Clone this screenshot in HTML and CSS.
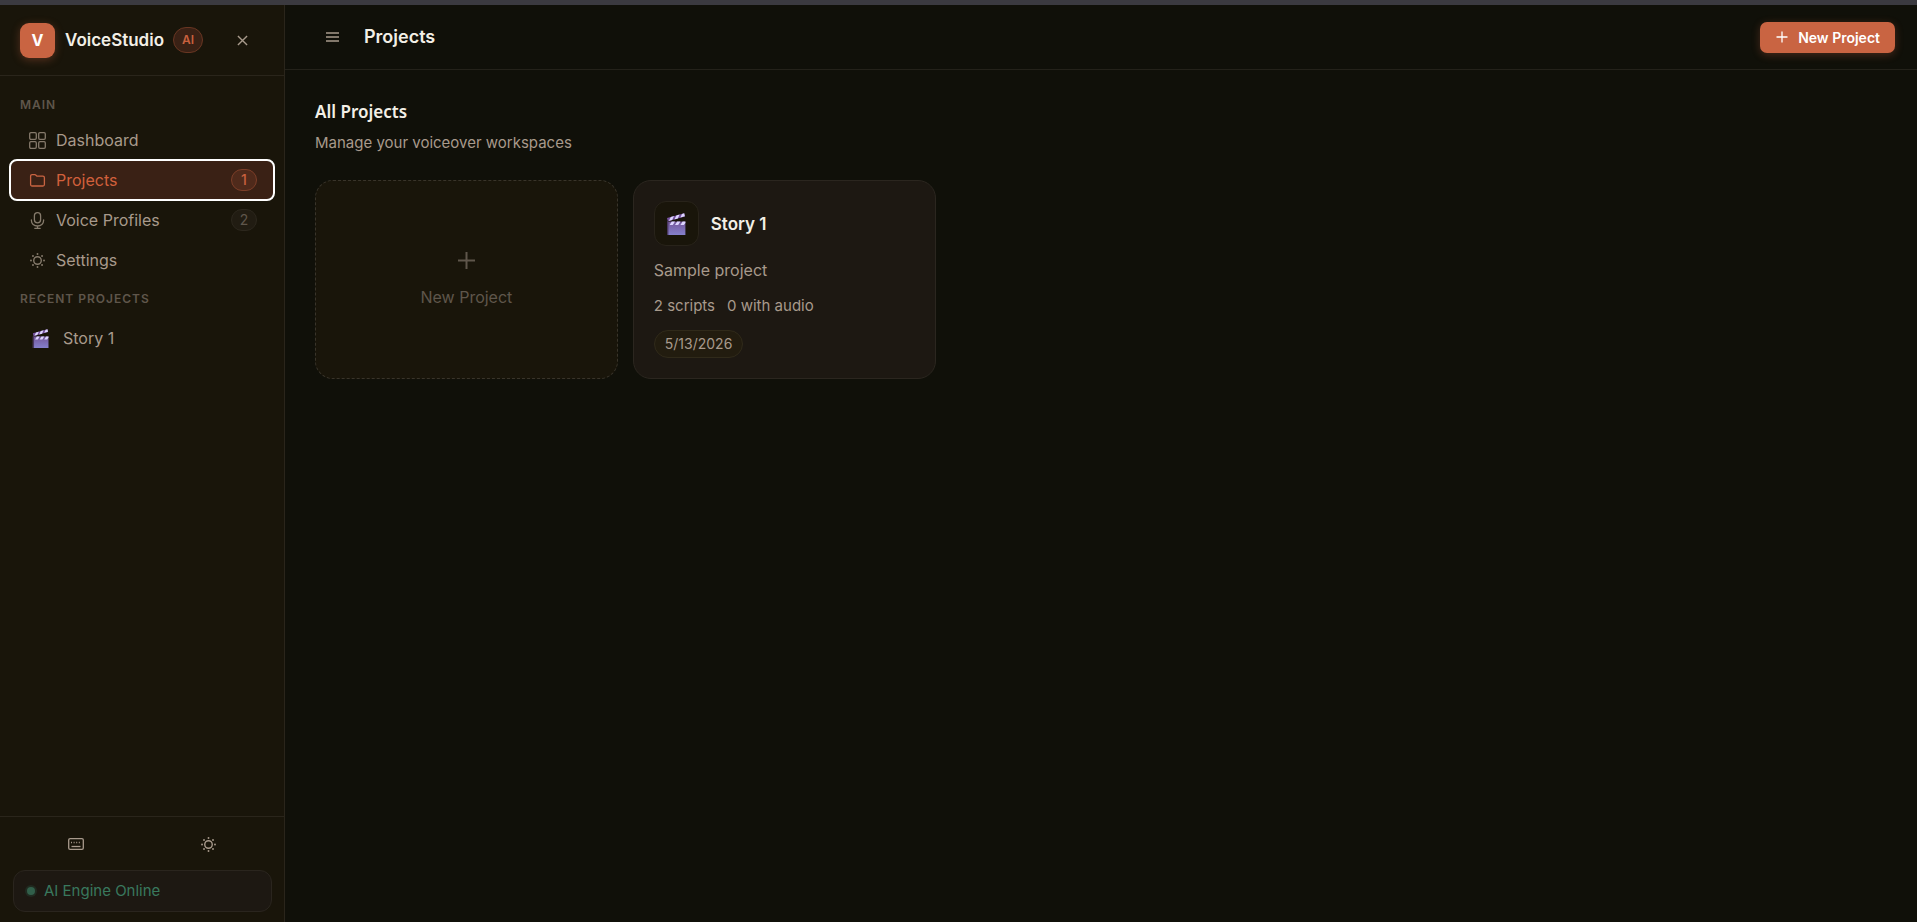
FILE: index.html
```
<!DOCTYPE html>
<html lang="en">
<head>
    <meta charset="UTF-8">
    <title>VoiceStudio AI</title>
    <link rel="stylesheet" href="styles.css">
</head>
<body>
    <svg class="defs" width="0" height="0" aria-hidden="true">
        <defs>
            <linearGradient id="slate" x1="0" y1="0" x2="0" y2="1">
                <stop offset="0" stop-color="#74579a"/>
                <stop offset="1" stop-color="#8580cc"/>
            </linearGradient>
            <symbol id="clapper" viewBox="0 0 20 20" preserveAspectRatio="none">
                <path d="M1 4.6 18.2.2 19 3.2 1.8 7.4z" fill="#7652a0"/>
                <path d="M4.8 3.6 8 2.8 6.2 6.3 2.8 7.2zM10.4 2.2l3.2-.8-1.8 3.6-3.4.8zM16 .8l2.2-.6.6 2.7-4.4 1.1z" fill="#ddd5ff"/>
                <path d="M1 7.8h18.4V20H1z" fill="url(#slate)"/>
                <path d="M1 7.8h1.4V20H1z" fill="#49375f"/>
                <path d="M5.8 7.8h3.2L6.8 11H3.6zM11.2 7.8h3.2L12.2 11H9zM16.6 7.8h2.8V9l-1.6 2h-3.4z" fill="#ddd5ff"/>
            </symbol>
            <symbol id="sun" viewBox="0 0 16 16">
                <circle cx="8" cy="8" r="4" fill="none" stroke="currentColor" stroke-width="1.5"/>
                <g fill="currentColor">
                    <circle cx="8" cy="1.1" r="1"/><circle cx="8" cy="14.9" r="1"/>
                    <circle cx="1.1" cy="8" r="1"/><circle cx="14.9" cy="8" r="1"/>
                    <circle cx="3.2" cy="3.2" r="1"/><circle cx="12.8" cy="12.8" r="1"/>
                    <circle cx="3.2" cy="12.8" r="1"/><circle cx="12.8" cy="3.2" r="1"/>
                </g>
            </symbol>
        </defs>
    </svg>

    <div class="app">
        <aside class="sidebar">
            <div class="brand">
                <span class="logo">V</span>
                <span class="brand-name">VoiceStudio</span>
                <span class="brand-tag">AI</span>
                <button type="button" class="icon-button close" aria-label="Close sidebar">
                    <svg width="11" height="11" viewBox="0 0 12 12" fill="none" stroke="currentColor" stroke-width="1.5"><path d="M1 1l10 10M11 1 1 11"/></svg>
                </button>
            </div>

            <nav class="nav">
                <h2 class="nav-label">Main</h2>
                <a href="#dashboard" class="nav-item">
                    <svg class="nav-icon" viewBox="0 0 17 17" fill="none" stroke="currentColor" stroke-width="1.3"><rect x=".7" y=".7" width="6.6" height="6.6" rx="1.2"/><rect x="9.7" y=".7" width="6.6" height="6.6" rx="1.2"/><rect x=".7" y="9.7" width="6.6" height="6.6" rx="1.2"/><rect x="9.7" y="9.7" width="6.6" height="6.6" rx="1.2"/></svg>
                    Dashboard
                </a>
                <a href="#projects" class="nav-item active">
                    <svg class="nav-icon" viewBox="0 0 17 17" fill="none" stroke="currentColor" stroke-width="1.3"><path d="M1.6 4.2c0-1 .6-1.5 1.5-1.5h2.8c.5 0 .8.2 1.1.5l.9 1h6c1 0 1.5.6 1.5 1.5v6.8c0 1-.6 1.5-1.5 1.5H3.1c-1 0-1.5-.6-1.5-1.5z"/></svg>
                    Projects
                    <span class="count">1</span>
                </a>
                <a href="#voices" class="nav-item">
                    <svg class="nav-icon" viewBox="0 0 17 17" fill="none" stroke="currentColor" stroke-width="1.3" stroke-linecap="round"><rect x="5.4" y=".7" width="6.2" height="10.2" rx="3.1"/><path d="M2.4 7.8v.6c0 3.2 2.6 5.6 6.1 5.6s6.1-2.4 6.1-5.6v-.6M8.5 14v2.3M5.8 16.3h5.4"/></svg>
                    Voice Profiles
                    <span class="count">2</span>
                </a>
                <a href="#settings" class="nav-item">
                    <svg class="nav-icon" viewBox="-1 -1 18 18"><use href="#sun" width="16" height="16"/></svg>
                    Settings
                </a>

                <h2 class="nav-label recent">Recent Projects</h2>
                <a href="#story-1" class="nav-item story">
                    <svg class="story-icon"><use href="#clapper"/></svg>
                    Story 1
                </a>
            </nav>

            <div class="sidebar-footer">
                <div class="tools">
                    <button type="button" class="icon-button" aria-label="Keyboard shortcuts">
                        <svg width="16" height="12" viewBox="0 0 16 12" fill="none" stroke="currentColor" stroke-width="1.3"><rect x=".7" y=".7" width="14.6" height="10.6" rx="1.4"/><path d="M3 4.5h10" stroke-dasharray="1 1.6"/><path d="M3.5 8.5h9"/></svg>
                    </button>
                    <button type="button" class="icon-button" aria-label="Toggle theme">
                        <svg width="15" height="15"><use href="#sun"/></svg>
                    </button>
                </div>
                <div class="status"><span class="status-dot"></span>AI Engine Online</div>
            </div>
        </aside>

        <main class="main">
            <header class="topbar">
                <button type="button" class="icon-button menu" aria-label="Toggle menu">
                    <svg width="13" height="10" viewBox="0 0 13 10" stroke="currentColor" stroke-width="1.4"><path d="M0 1h13M0 5h13M0 9h13"/></svg>
                </button>
                <h1 class="page-title">Projects</h1>
                <button type="button" class="primary">
                    <svg width="12" height="12" viewBox="0 0 12 12" stroke="currentColor" stroke-width="1.3"><path d="M6 .5v11M.5 6h11"/></svg>
                    New Project
                </button>
            </header>

            <section class="content">
                <h2 class="section-title">All Projects</h2>
                <p class="section-text">Manage your voiceover workspaces</p>

                <div class="grid">
                    <button type="button" class="card new-card">
                        <svg width="17" height="17" viewBox="0 0 17 17" stroke="currentColor" stroke-width="2"><path d="M8.5 0v17M0 8.5h17"/></svg>
                        New Project
                    </button>
                    <article class="card">
                        <div class="card-head">
                            <span class="card-icon"><svg width="20" height="22"><use href="#clapper"/></svg></span>
                            <h3 class="card-title">Story 1</h3>
                        </div>
                        <p class="card-text">Sample project</p>
                        <div class="card-stats"><span>2 scripts</span><span>0 with audio</span></div>
                        <time class="card-date" datetime="2026-05-13">5/13/2026</time>
                    </article>
                </div>
            </section>
        </main>
    </div>
</body>
</html>
```

FILE: styles.css
```
* {
    box-sizing: border-box;
}

body {
    margin: 0;
    background: #101009;
    color: #a89a8c;
    font-family: Inter, "Liberation Sans", sans-serif;
    font-size: 16px;
    line-height: 24px;
}

h1, h2, h3, p {
    margin: 0;
}

button {
    font-family: inherit;
    cursor: pointer;
}

.defs {
    position: absolute;
}

.app {
    display: flex;
    min-height: 100vh;
    border-top: 5px solid #3b3a40;
}

.sidebar {
    display: flex;
    flex-direction: column;
    flex: none;
    width: 285px;
    background: #19150a;
    border-right: 1px solid #2a251b;
}

.brand {
    display: flex;
    align-items: center;
    height: 71px;
    padding: 0 20px;
    border-bottom: 1px solid #2a251b;
}

.logo {
    display: flex;
    align-items: center;
    justify-content: center;
    width: 35px;
    height: 35px;
    margin-right: 10px;
    border-radius: 9px;
    background: #c96442;
    box-shadow: 0 2px 8px rgba(201, 100, 66, 0.35);
    color: #fff;
    font-size: 16px;
    font-weight: 700;
}

.brand-name {
    color: #f3efe6;
    font-size: 17px;
    font-weight: 600;
}

.brand-tag {
    margin-left: 9px;
    padding: 0 8px;
    border: 1px solid #693622;
    border-radius: 13px;
    background: #3a2115;
    color: #c9603e;
    font-size: 12px;
    font-weight: 600;
}

.icon-button {
    display: flex;
    align-items: center;
    justify-content: center;
    height: 32px;
    padding: 0;
    border: 0;
    background: none;
    color: #a89a8c;
}

.close {
    width: 32px;
    margin-left: auto;
    margin-right: 6px;
}

.nav {
    display: flex;
    flex-direction: column;
    flex: 1;
    gap: 2px;
    padding: 19px 11px;
}

.nav-label {
    margin-bottom: 4px;
    padding: 0 9px;
    color: #5f564b;
    font-size: 12px;
    font-weight: 600;
    line-height: 20px;
    letter-spacing: 1px;
    text-transform: uppercase;
}

.recent {
    margin: 8px 0;
}

.nav-item {
    display: flex;
    align-items: center;
    gap: 10px;
    height: 38px;
    padding: 0 16px 0 18px;
    border-radius: 6px;
    color: #a89a8c;
    text-decoration: none;
}

.nav-icon {
    width: 17px;
    height: 17px;
    color: #857a6b;
}

.nav-item.active {
    background: #3a2115;
    outline: 2px solid #fff;
    color: #d2603c;
}

.active .nav-icon {
    color: #c96442;
}

.count {
    width: 26px;
    margin-left: auto;
    border: 1px solid #2c271d;
    border-radius: 11px;
    background: #211c12;
    color: #5f564b;
    font-size: 14px;
    line-height: 20px;
    text-align: center;
}

.active .count {
    border-color: #7c3e28;
    background: #4f2a1b;
    color: #c9603e;
    font-weight: 500;
}

.story {
    gap: 14px;
    padding-left: 21px;
}

.story-icon {
    width: 17px;
    height: 19px;
}

.sidebar-footer {
    padding: 11px 12px 10px 13px;
    border-top: 1px solid #2a251b;
}

.tools {
    display: flex;
    gap: 6px;
    margin-bottom: 10px;
}

.tools .icon-button {
    flex: 1;
}

.status {
    display: flex;
    align-items: center;
    gap: 9px;
    height: 42px;
    padding: 0 13px;
    border: 1px solid #2a251e;
    border-radius: 12px;
    background: #1d1812;
    color: #39795e;
    font-size: 15px;
}

.status-dot {
    width: 8px;
    height: 8px;
    border-radius: 50%;
    background: #315f4a;
    box-shadow: 0 0 0 2px #202a20;
}

.main {
    flex: 1;
}

.topbar {
    display: flex;
    align-items: center;
    height: 65px;
    padding: 0 22px 0 25px;
    border-bottom: 1px solid #24221a;
}

.menu {
    width: 45px;
    margin-right: 9px;
}

.page-title {
    color: #f3efe6;
    font-size: 18px;
    font-weight: 600;
}

.primary {
    display: flex;
    align-items: center;
    gap: 10px;
    height: 31px;
    margin-left: auto;
    padding: 0 15px 0 16px;
    border: 0;
    border-radius: 7px;
    background: #c96442;
    box-shadow: 0 2px 8px rgba(201, 100, 66, 0.3);
    color: #fff;
    font-size: 14px;
    font-weight: 600;
}

.content {
    padding: 30px 28px 30px 30px;
}

.section-title {
    color: #f3efe6;
    font-family: "Noto Sans", "Open Sans", sans-serif;
    font-size: 17px;
    font-weight: 600;
}

.section-text {
    margin-top: 7px;
    font-size: 15px;
}

.grid {
    display: grid;
    grid-template-columns: repeat(auto-fill, minmax(290px, 1fr));
    gap: 15px;
    margin-top: 25px;
}

.card {
    min-height: 199px;
    padding: 20px;
    border: 1px solid #2b261f;
    border-radius: 18px;
    background: #1d1812;
}

.new-card {
    display: flex;
    flex-direction: column;
    align-items: center;
    justify-content: center;
    gap: 16px;
    padding-top: 22px;
    border: 1px dashed #39342a;
    background: #19150a;
    color: #5f564b;
    font-size: 16px;
    line-height: 24px;
}

.card-head {
    display: flex;
    align-items: center;
    gap: 12px;
}

.card-icon {
    display: flex;
    align-items: center;
    justify-content: center;
    width: 45px;
    height: 45px;
    border: 1px solid #28231a;
    border-radius: 12px;
    background: #19150a;
}

.card-title {
    color: #f3efe6;
    font-size: 17px;
    font-weight: 600;
}

.card-text {
    margin-top: 12px;
}

.card-stats {
    display: flex;
    gap: 12px;
    margin: 12px 0;
    font-size: 15px;
}

.card-date {
    display: block;
    width: fit-content;
    padding: 0 10px;
    border: 1px solid #302a1a;
    border-radius: 14px;
    background: #221c0f;
    font-size: 14px;
    line-height: 26px;
}
```
